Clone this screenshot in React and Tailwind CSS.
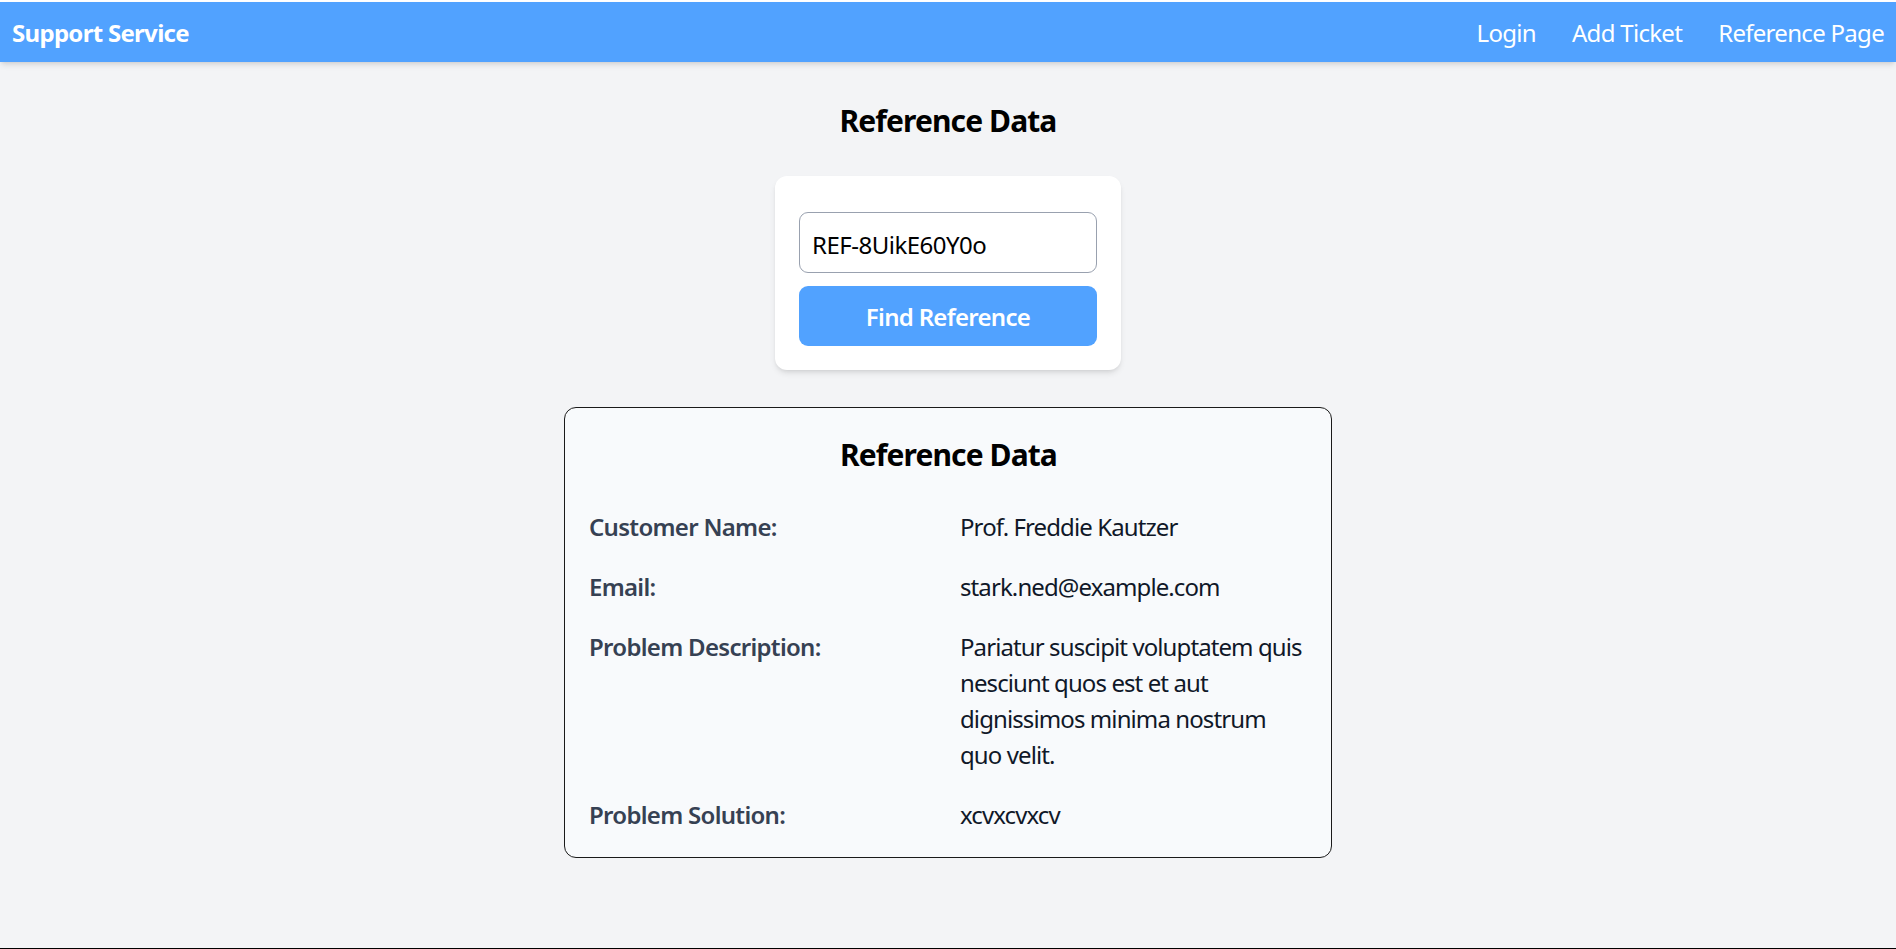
export default function App() {
  const rows = [
    { label: 'Customer Name:', value: 'Prof. Freddie Kautzer' },
    { label: 'Email:', value: 'stark.ned@example.com' },
    {
      label: 'Problem Description:',
      value: 'Pariatur suscipit voluptatem quis nesciunt quos est et aut dignissimos minima nostrum quo velit.',
    },
    { label: 'Problem Solution:', value: 'xcvxcvxcv' },
  ]

  return (
    <div
      className="min-h-screen flex flex-col bg-white pt-[2px] border-b border-black tracking-[-0.7px]"
      style={{ fontFamily: '"Segoe UI", "Noto Sans", "Open Sans", sans-serif' }}
    >
      <div className="flex-1 flex flex-col bg-gray-100">
        <nav className="h-[60px] bg-[#51a2ff] flex items-center justify-between px-3 shadow-md text-white">
          <span className="text-[24px] font-bold pt-[2px]">Support Service</span>
          <div className="flex items-center gap-9 text-[24px] pt-[2px]">
            <a href="#">Login</a>
            <a href="#">Add Ticket</a>
            <a href="#">Reference Page</a>
          </div>
        </nav>

        <main className="flex flex-col items-center pt-[36px] pb-10">
          <h1 className="text-[30px] leading-[45px] font-bold text-black tracking-[-0.9px]">Reference Data</h1>

          <div className="mt-[33px] w-[346px] bg-white rounded-[12px] shadow-md pt-9 px-6 pb-6">
            <input
              defaultValue="REF-8UikE60Y0o"
              className="w-full h-[61px] border border-gray-400 rounded-[9px] px-3 pt-[3px] text-[24px] text-black outline-none tracking-[-0.5px]"
            />
            <button className="mt-[13px] w-full h-[60px] bg-[#51a2ff] rounded-[9px] text-white text-[24px] font-semibold pt-[2px]">
              Find Reference
            </button>
          </div>

          <div className="mt-[37px] w-[768px] bg-slate-50 border border-[#1a1a1a] rounded-[12px] pt-6 pb-6 pl-6 pr-[23px]">
            <h2 className="text-center text-[30px] leading-[45px] font-bold text-black mb-8 tracking-[-0.9px]">
              Reference Data
            </h2>
            <div className="grid grid-cols-[347px_1fr] gap-x-6 gap-y-6 text-[24px] leading-[36px]">
              {rows.map((row) => (
                <div key={row.label} className="contents">
                  <div className="font-semibold text-gray-700">{row.label}</div>
                  <div className="text-gray-900 tracking-[-0.9px]">{row.value}</div>
                </div>
              ))}
            </div>
          </div>
        </main>
      </div>
    </div>
  )
}
